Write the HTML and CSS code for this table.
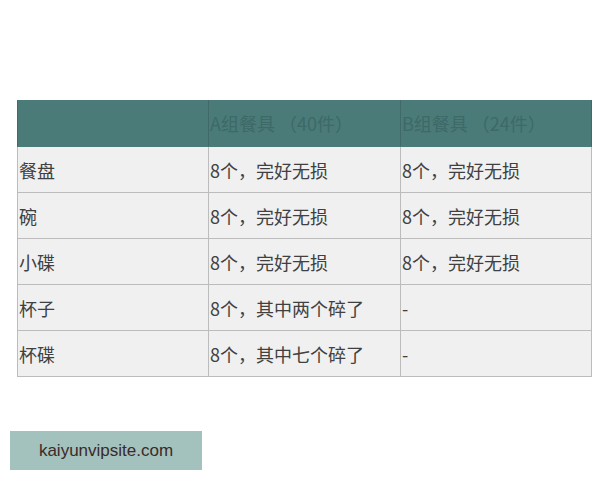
FILE: index.html
```html
<!DOCTYPE html>
<html lang="zh">
<head>
<meta charset="utf-8">
<link rel="stylesheet" href="styles.css">
</head>
<body>
<div class="page">
  <table class="tbl">
    <colgroup><col class="c1"><col class="c2"><col class="c3"></colgroup>
    <thead>
      <tr><th></th><th>A组餐具 （40件）</th><th>B组餐具 （24件）</th></tr>
    </thead>
    <tbody>
      <tr><td>餐盘</td><td>8个，完好无损</td><td>8个，完好无损</td></tr>
      <tr><td>碗</td><td>8个，完好无损</td><td>8个，完好无损</td></tr>
      <tr><td>小碟</td><td>8个，完好无损</td><td>8个，完好无损</td></tr>
      <tr><td>杯子</td><td>8个，其中两个碎了</td><td>-</td></tr>
      <tr><td>杯碟</td><td>8个，其中七个碎了</td><td>-</td></tr>
    </tbody>
  </table>
  <div class="mark">kaiyunvipsite.com</div>
</div>
</body>
</html>
```
FILE: styles.css
```css
html, body { margin: 0; padding: 0; background: #ffffff; }
.page { width: 600px; height: 480px; padding-top: 100px; box-sizing: border-box; position: relative; }
.tbl {
  margin-left: 17px;
  width: 574px;
  border-collapse: collapse;
  table-layout: fixed;
  font-family: "Noto Sans CJK SC", "Liberation Sans", sans-serif;
  font-size: 18px;
  color: #404040;
}
.c1 { width: 191px; }
.c2 { width: 192px; }
.c3 { width: 191px; }
.tbl th, .tbl td {
  border: 1px solid #bcbcbc;
  text-align: left;
  padding: 0 0 0 1px;
  font-weight: normal;
  white-space: nowrap;
  line-height: 1.2;
}
.tbl th {
  background: #4b7b79;
  color: #3d6967;
  height: 45px;
  border-color: #4b7b79 #3f6a68 #4b7b79 #3f6a68;
}
.tbl td {
  background: #f0f0f0;
  height: 43px;
  padding-top: 2px;
}
.mark {
  position: absolute;
  left: 10px;
  top: 431px;
  width: 192px;
  height: 39px;
  background: #a3c1bd;
  color: #3b2a28;
  font-family: "Liberation Sans", Arial, sans-serif;
  font-size: 17px;
  display: flex;
  align-items: center;
  justify-content: center;
}
```
